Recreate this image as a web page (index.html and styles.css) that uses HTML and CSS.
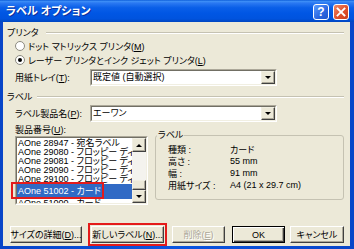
FILE: index.html
```html
<!DOCTYPE html>
<html lang="ja">
<head>
<meta charset="utf-8">
<title>ラベル オプション</title>
<link rel="stylesheet" href="styles.css">
</head>
<body>
<div class="window">
  <div class="titlebar">
    <span class="title">ラベル オプション</span>
    <div class="tb-buttons">
      <span class="tb-btn help">?</span>
      <span class="tb-btn close"><svg width="10" height="10" viewBox="0 0 10 10"><path d="M1.5 1.5 L8.5 8.5 M8.5 1.5 L1.5 8.5" stroke="#fff" stroke-width="1.8" stroke-linecap="square"/></svg></span>
    </div>
  </div>
  <div class="client">
    <div class="section-head"><span>プリンタ</span><i class="etch"></i></div>
    <div class="radio-row first"><span class="radio"></span><span>ドット マトリックス プリンタ(<u>M</u>)</span></div>
    <div class="radio-row"><span class="radio checked"></span><span>レーザー プリンタとインク ジェット プリンタ(<u>L</u>)</span></div>
    <div class="field-row tray">
      <span class="field-label">用紙トレイ(<u>T</u>):</span>
      <div class="combo"><div class="combo-inner"><span class="combo-text">既定値 (自動選択)</span><span class="combo-btn"><i class="tri-down"></i></span></div></div>
    </div>
    <div class="section-head second"><span>ラベル</span><i class="etch short"></i></div>
    <div class="field-row vendor">
      <span class="field-label">ラベル製品名(<u>P</u>):</span>
      <div class="combo"><div class="combo-inner"><span class="combo-text">エーワン</span><span class="combo-btn"><i class="tri-down"></i></span></div></div>
    </div>
    <div class="lower">
      <div class="left-col">
        <div class="list-label">製品番号(<u>U</u>):</div>
        <div class="listbox">
          <div class="listbox-inner">
            <div class="items">
              <div class="item">AOne 28947 - 宛名ラベル</div>
              <div class="item">AOne 29080 - フロッピー ディスク</div>
              <div class="item">AOne 29081 - フロッピー ディスク</div>
              <div class="item">AOne 29090 - フロッピー ディスク</div>
              <div class="item">AOne 29100 - フロッピー ディスク</div>
              <div class="item selected">AOne 51002 - カード</div>
              <div class="item">AOne 51000 - カード</div>
            </div>
            <div class="scrollbar">
              <span class="sb-btn up"><i class="tri-up"></i></span>
              <span class="sb-track"></span>
              <span class="sb-thumb"></span>
              <span class="sb-btn down"><i class="tri-down"></i></span>
            </div>
          </div>
        </div>
        <span class="callout"></span>
      </div>
      <fieldset class="info">
        <legend>ラベル</legend>
        <div class="info-grid">
          <span>種類 :</span><span>カード</span>
          <span>高さ :</span><span>55 mm</span>
          <span>幅 :</span><span>91 mm</span>
          <span>用紙サイズ :</span><span>A4 (21 x 29.7 cm)</span>
        </div>
      </fieldset>
    </div>
    <div class="buttons">
      <span class="btn size">サイズの詳細(<u>D</u>)...</span>
      <span class="btn newlabel">新しいラベル(<u>N</u>)...</span>
      <span class="btn del disabled">削除(<u>E</u>)</span>
      <span class="btn ok default">OK</span>
      <span class="btn cancel">キャンセル</span>
    </div>
  </div>
</div>
</body>
</html>
```
FILE: styles.css
```css
* { box-sizing: border-box; }
html, body { margin: 0; padding: 0; }
body {
  width: 354px;
  height: 249px;
  overflow: hidden;
  background: #fff;
  font-family: "Liberation Sans", "Noto Sans CJK JP", sans-serif;
  font-size: 9px;
  font-feature-settings: "palt";
  color: #000;
}
u { text-decoration: underline; text-underline-offset: 1px; }

.window {
  width: 354px;
  height: 249px;
  display: flex;
  flex-direction: column;
  background: linear-gradient(to right, #0845c8, #0a55e0 50%, #0845c8);
  padding: 0 4px 3px 3px;
}

.titlebar {
  height: 22px;
  margin: 0 -4px 0 -3px;
  padding: 0 5px 0 6px;
  display: flex;
  align-items: center;
  justify-content: space-between;
  background: linear-gradient(to bottom, #0a5bd8 0%, #3d8ef6 6%, #2a78f2 14%, #0a5fe8 35%, #0056e4 60%, #0053de 85%, #0046c0 100%);
}
.title {
  color: #fff;
  font-size: 11px;
  font-weight: bold;
  line-height: 12px;
  text-shadow: 1px 1px 0 #0b2f9a;
}
.tb-buttons { display: flex; gap: 4px; margin-top: 2px; }
.tb-btn {
  width: 16px;
  height: 16px;
  border: 1px solid #fff;
  border-radius: 3px;
  display: flex;
  align-items: center;
  justify-content: center;
  color: #fff;
}
.tb-btn.help {
  background: linear-gradient(135deg, #5a9cff, #2a66e0 60%, #1f55cc);
  font-family: "Liberation Sans", sans-serif;
  font-size: 12px;
  font-weight: bold;
  line-height: 12px;
}
.tb-btn.close {
  background: linear-gradient(135deg, #f08a6a, #e0502c 55%, #c83d1c);
}

.client {
  flex: 1;
  background: #ece9d8;
  padding: 6px 6px 3px 4px;
  display: flex;
  flex-direction: column;
}

.section-head {
  display: flex;
  align-items: center;
  height: 10px;
  line-height: 10px;
}
.section-head .etch {
  flex: 1;
  margin-left: 7px;
  border-top: 1px solid #c5c2b2;
  border-bottom: 1px solid #fff;
}
.section-head .etch.short { margin-left: 5px; }
.section-head.second { margin-top: 6px; }

.radio-row {
  display: flex;
  align-items: center;
  height: 14px;
  padding-left: 8px;
}
.radio-row.first { margin-top: 1px; }
.radio {
  width: 10px;
  height: 10px;
  border-radius: 50%;
  border: 1px solid #8d8b80;
  background: #fff;
  margin-right: 3px;
  display: flex;
  align-items: center;
  justify-content: center;
}
.radio.checked::after {
  content: "";
  width: 4px;
  height: 4px;
  border-radius: 50%;
  background: #000;
}

.field-row {
  display: flex;
  align-items: center;
  height: 17px;
  padding-left: 8px;
}
.field-row.tray { margin-top: 2px; }
.field-row.vendor { margin-top: 3px; }
.field-label { width: 75px; }

.combo {
  width: 187px;
  height: 17px;
  border: 1px solid;
  border-color: #aca899 #fff #fff #aca899;
}
.combo-inner {
  height: 100%;
  display: flex;
  background: #fff;
  border: 1px solid;
  border-color: #716f64 #f1efe2 #f1efe2 #716f64;
}
.combo-text {
  flex: 1;
  padding-left: 1px;
  line-height: 13px;
}
.combo-btn {
  width: 14px;
  height: 13px;
  background: #ece9d8;
  border: 1px solid;
  border-color: #f1efe2 #404040 #404040 #f1efe2;
  box-shadow: inset -1px -1px 0 #aca899;
  display: flex;
  align-items: center;
  justify-content: center;
}
.tri-down {
  width: 0;
  height: 0;
  border-left: 3px solid transparent;
  border-right: 3px solid transparent;
  border-top: 3px solid #000;
}
.tri-up {
  width: 0;
  height: 0;
  border-left: 3px solid transparent;
  border-right: 3px solid transparent;
  border-bottom: 3px solid #000;
}

.lower {
  margin-top: 3px;
  height: 80px;
  display: flex;
  align-items: flex-start;
}
.left-col {
  position: relative;
  margin-left: 8px;
  width: 133px;
  height: 80px;
}
.list-label { height: 10px; line-height: 10px; }
.listbox {
  margin-top: 1px;
  height: 69px;
  border: 1px solid;
  border-color: #aca899 #fff #fff #aca899;
}
.listbox-inner {
  height: 100%;
  display: flex;
  background: #fff;
  border: 1px solid;
  border-color: #716f64 #f1efe2 #f1efe2 #716f64;
}
.items {
  flex: 1;
  min-width: 0;
  overflow: hidden;
  padding-top: 1px;
}
.item {
  height: 9px;
  line-height: 9px;
  padding-left: 1px;
  white-space: nowrap;
  overflow: visible;
}
.item.selected {
  position: relative;
  z-index: 1;
  height: 15px;
  line-height: 15px;
  background: #316ac5;
  color: #fff;
}
.scrollbar {
  width: 14px;
  display: flex;
  flex-direction: column;
  background: #f4f3ee;
}
.sb-btn {
  width: 14px;
  height: 14px;
  background: #ece9d8;
  border: 1px solid;
  border-color: #f1efe2 #404040 #404040 #f1efe2;
  box-shadow: inset -1px -1px 0 #aca899;
  display: flex;
  align-items: center;
  justify-content: center;
}
.sb-btn.down { height: 13px; }
.sb-track { flex: 1; }
.sb-thumb {
  height: 10px;
  background: #ece9d8;
  border: 1px solid;
  border-color: #f1efe2 #404040 #404040 #f1efe2;
  box-shadow: inset -1px -1px 0 #aca899;
}
.callout {
  position: absolute;
  left: -4px;
  top: 57px;
  width: 93px;
  height: 17px;
  border: 2px solid #e41b1b;
  z-index: 2;
}

.info {
  margin: 5px 0 0 7px;
  padding: 0;
  width: 189px;
  height: 70px;
  border: 1px solid #c5c2b2;
  border-radius: 3px;
  min-width: 0;
}
.info legend {
  margin-left: 1px;
  padding: 0 1px;
  line-height: 10px;
  height: 10px;
}
.info-grid {
  display: grid;
  grid-template-columns: 62px auto;
  grid-auto-rows: 12px;
  align-items: center;
  padding: 3px 0 0 12px;
}

.buttons {
  margin-top: auto;
  display: flex;
  padding-left: 3px;
}
.btn {
  height: 17px;
  display: flex;
  align-items: center;
  justify-content: center;
  background: #ece9d8;
  border: 1px solid;
  border-color: #fff #404040 #404040 #fff;
  box-shadow: inset -1px -1px 0 #aca899;
  white-space: nowrap;
}
.btn.size { width: 72px; }
.btn.newlabel { width: 73px; margin-left: 9px; outline: 2px solid #e41b1b; outline-offset: 1px; }
.btn.del { width: 53px; margin-left: 8px; }
.btn.ok { width: 53px; margin-left: 7px; }
.btn.cancel { width: 54px; margin-left: 5px; }
.btn.default {
  border-color: #000;
  box-shadow: inset 1px 1px 0 #fff, inset -1px -1px 0 #404040, inset -2px -2px 0 #aca899;
}
.btn.disabled {
  color: #aca899;
  text-shadow: 1px 1px 0 #fff;
}
```
